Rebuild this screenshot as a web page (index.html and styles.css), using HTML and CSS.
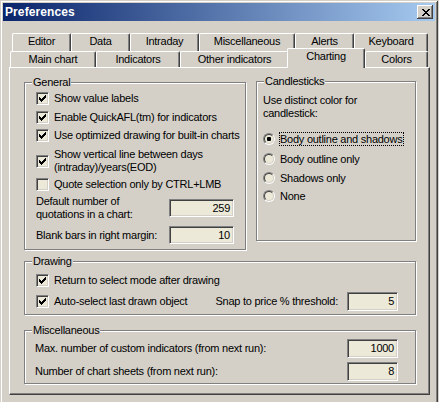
FILE: index.html
```html
<!DOCTYPE html>
<html>
<head>
<meta charset="utf-8">
<title>Preferences</title>
<link rel="stylesheet" href="styles.css">
</head>
<body>
<div class="window">
  <div class="titlebar">
    <span class="title">Preferences</span>
    <span class="close"><svg width="8" height="7" viewBox="0 0 8 7" shape-rendering="crispEdges"><path d="M0 0h2v1h-2zM6 0h2v1h-2zM1 1h2v1h-2zM5 1h2v1h-2zM2 2h4v1h-4zM3 3h2v1h-2zM2 4h4v1h-4zM1 5h2v1h-2zM5 5h2v1h-2zM0 6h2v1h-2zM6 6h2v1h-2z" fill="#000"/></svg></span>
  </div>
  <div class="sheet">
    <div class="tabrow back">
      <div class="tab t-editor">Editor</div>
      <div class="tab t-data">Data</div>
      <div class="tab t-intraday">Intraday</div>
      <div class="tab t-misc">Miscellaneous</div>
      <div class="tab t-alerts">Alerts</div>
      <div class="tab t-keyboard">Keyboard</div>
    </div>
    <div class="tabrow front">
      <div class="tab t-main">Main chart</div>
      <div class="tab t-ind">Indicators</div>
      <div class="tab t-other">Other indicators</div>
      <div class="tab t-charting selected">Charting</div>
      <div class="tab t-colors">Colors</div>
    </div>
    <div class="panel">
      <div class="groups-top">
        <div class="group general">
          <span class="legend">General</span>
          <div class="cb-row r1"><span class="cb"><svg width="7" height="7" viewBox="0 0 7 7" shape-rendering="crispEdges"><path d="M0 2h1v3h-1zM1 3h1v3h-1zM2 4h1v3h-1zM3 3h1v3h-1zM4 2h1v3h-1zM5 1h1v3h-1zM6 0h1v3h-1z" fill="#000"/></svg></span><span class="lbl">Show value labels</span></div>
          <div class="cb-row r2"><span class="cb"><svg width="7" height="7" viewBox="0 0 7 7" shape-rendering="crispEdges"><path d="M0 2h1v3h-1zM1 3h1v3h-1zM2 4h1v3h-1zM3 3h1v3h-1zM4 2h1v3h-1zM5 1h1v3h-1zM6 0h1v3h-1z" fill="#000"/></svg></span><span class="lbl">Enable QuickAFL(tm) for indicators</span></div>
          <div class="cb-row r3"><span class="cb"><svg width="7" height="7" viewBox="0 0 7 7" shape-rendering="crispEdges"><path d="M0 2h1v3h-1zM1 3h1v3h-1zM2 4h1v3h-1zM3 3h1v3h-1zM4 2h1v3h-1zM5 1h1v3h-1zM6 0h1v3h-1z" fill="#000"/></svg></span><span class="lbl">Use optimized drawing for built-in charts</span></div>
          <div class="cb-row r4"><span class="cb"><svg width="7" height="7" viewBox="0 0 7 7" shape-rendering="crispEdges"><path d="M0 2h1v3h-1zM1 3h1v3h-1zM2 4h1v3h-1zM3 3h1v3h-1zM4 2h1v3h-1zM5 1h1v3h-1zM6 0h1v3h-1z" fill="#000"/></svg></span><span class="lbl">Show vertical line between days<br>(intraday)/years(EOD)</span></div>
          <div class="cb-row r5"><span class="cb"></span><span class="lbl">Quote selection only by CTRL+LMB</span></div>
          <div class="field-row f1"><span class="flabel">Default number of<br>quotations in a chart:</span><span class="edit e-wide">259</span></div>
          <div class="field-row f2"><span class="flabel">Blank bars in right margin:</span><span class="edit e-wide">10</span></div>
        </div>
        <div class="group candles">
          <span class="legend">Candlesticks</span>
          <div class="ctext">Use distinct color for<br>candlestick:</div>
          <div class="rb-row q1"><span class="rb"><span class="rb-in on"></span></span><span class="rlabel focus">Body outline and shadows</span></div>
          <div class="rb-row q2"><span class="rb"><span class="rb-in"></span></span><span class="rlabel">Body outline only</span></div>
          <div class="rb-row q3"><span class="rb"><span class="rb-in"></span></span><span class="rlabel">Shadows only</span></div>
          <div class="rb-row q4"><span class="rb"><span class="rb-in"></span></span><span class="rlabel">None</span></div>
        </div>
      </div>
      <div class="group drawing">
        <span class="legend">Drawing</span>
        <div class="cb-row"><span class="cb"><svg width="7" height="7" viewBox="0 0 7 7" shape-rendering="crispEdges"><path d="M0 2h1v3h-1zM1 3h1v3h-1zM2 4h1v3h-1zM3 3h1v3h-1zM4 2h1v3h-1zM5 1h1v3h-1zM6 0h1v3h-1z" fill="#000"/></svg></span><span class="lbl">Return to select mode after drawing</span></div>
        <div class="field-row d2"><span class="cb"><svg width="7" height="7" viewBox="0 0 7 7" shape-rendering="crispEdges"><path d="M0 2h1v3h-1zM1 3h1v3h-1zM2 4h1v3h-1zM3 3h1v3h-1zM4 2h1v3h-1zM5 1h1v3h-1zM6 0h1v3h-1z" fill="#000"/></svg></span><span class="lbl">Auto-select last drawn object</span><span class="snap">Snap to price % threshold:</span><span class="edit e-narrow">5</span></div>
      </div>
      <div class="group misc">
        <span class="legend">Miscellaneous</span>
        <div class="field-row m1"><span class="flabel">Max. number of custom indicators (from next run):</span><span class="edit e-narrow">1000</span></div>
        <div class="field-row m2"><span class="flabel">Number of chart sheets (from next run):</span><span class="edit e-narrow">8</span></div>
      </div>
    </div>
  </div>
</div>
</body>
</html>
```
FILE: styles.css
```css
html, body {
  overflow: hidden;
}

body {
  margin: 0;
  background: #d4d0c8;
  font-family: "Liberation Sans", Arial, sans-serif;
  font-size: 11px;
  letter-spacing: -0.25px;
  color: #000;
}

.window {
  width: 438px;
  height: 402px;
  box-sizing: border-box;
  padding: 3px;
  background: #d4d0c8;
  box-shadow: inset 1px 1px #d4d0c8, inset -1px 0 #404040, inset 2px 2px #fff, inset -2px 0 #808080;
  overflow: hidden;
}

.titlebar {
  height: 18px;
  display: flex;
  align-items: center;
  justify-content: space-between;
  padding: 0 2px;
  background: linear-gradient(to right, #0a246a, #a6caf0);
}

.title {
  color: #fff;
  font-weight: bold;
  font-size: 12px;
  letter-spacing: 0.1px;
}

.close {
  width: 16px;
  height: 14px;
  box-sizing: border-box;
  display: flex;
  align-items: center;
  justify-content: center;
  padding-left: 1px;
  background: #d4d0c8;
  box-shadow: inset -1px -1px #404040, inset 1px 1px #fff, inset -2px -2px #808080;
}

.sheet {
  padding: 12px 0 0 6px;
}

.tabrow {
  display: flex;
}

.tabrow.back {
  margin-left: 3px;
  height: 18px;
}

.tabrow.front {
  margin-left: 1px;
  height: 16px;
}

.tab {
  box-sizing: border-box;
  height: 100%;
  flex: none;
  border-top: 1px solid #fff;
  border-left: 1px solid #fff;
  border-right: 1px solid #404040;
  border-radius: 2px 2px 0 0;
  box-shadow: inset -1px 0 #808080;
  background: #d4d0c8;
  text-align: center;
  line-height: 15px;
  white-space: nowrap;
}

.t-editor { width: 59px; }
.t-data { width: 59px; }
.t-intraday { width: 69px; }
.t-misc { width: 96px; }
.t-alerts { width: 59px; }
.t-keyboard { width: 74px; }

.t-main { width: 86px; }
.t-ind { width: 84px; }
.t-other { width: 109px; }
.t-charting { width: 78px; }
.t-colors { width: 63px; }

.tab.selected {
  height: 20px;
  margin: -3px 0 -1px -2px;
  position: relative;
  z-index: 1;
}

.panel {
  width: 421px;
  height: 328px;
  box-sizing: border-box;
  border: 1px solid;
  border-color: #fff #404040 #404040 #fff;
  box-shadow: inset -1px -1px #808080;
  padding: 14px 0 0 14px;
}

.groups-top {
  display: flex;
  align-items: flex-start;
  gap: 10px;
}

.group {
  position: relative;
  box-sizing: border-box;
  border: 1px solid #808080;
  box-shadow: 1px 1px #fff, inset 1px 1px #fff;
}

.legend {
  position: absolute;
  top: -7px;
  left: 7px;
  padding: 0 1px;
  line-height: 13px;
  background: #d4d0c8;
}

.general {
  width: 222px;
  height: 168px;
  padding: 9px 11px 0 11px;
}

.candles {
  width: 160px;
  height: 160px;
  margin-top: -1px;
  padding: 12px 6px 0 6px;
}

.drawing {
  width: 392px;
  height: 54px;
  margin-top: 11px;
  padding: 12px 17px 0 11px;
}

.misc {
  width: 392px;
  height: 54px;
  margin-top: 15px;
  padding: 8px 17px 0 10px;
}

.cb-row {
  display: flex;
  align-items: center;
  height: 13px;
  line-height: 13px;
}

.r2 { margin-top: 6px; }
.r3 { margin-top: 5px; }
.r4 { margin-top: 6px; height: 26px; }
.r5 { margin-top: 4px; }

.cb {
  flex: none;
  width: 13px;
  height: 13px;
  box-sizing: border-box;
  padding: 2px;
  display: flex;
  border: 1px solid;
  border-color: #808080 #fff #fff #808080;
  box-shadow: inset 1px 1px #404040, inset -1px -1px #d4d0c8;
  background: #ece9d8;
}

.lbl {
  margin-left: 5px;
  white-space: nowrap;
}

.field-row {
  display: flex;
  align-items: center;
  height: 18px;
  line-height: 13px;
}

.f1 { margin-top: 8px; }
.f2 { margin-top: 9px; }
.d2 { margin-top: 5px; height: 19px; }
.m2 { margin-top: 4px; }
.m1, .m2 { height: 19px; }

.flabel {
  white-space: nowrap;
}

.edit {
  flex: none;
  box-sizing: border-box;
  height: 100%;
  margin-left: auto;
  border: 1px solid;
  border-color: #808080 #fff #fff #808080;
  box-shadow: inset 1px 1px #404040, inset -1px -1px #d4d0c8;
  background: #ece9d8;
  text-align: right;
  padding-right: 3px;
  line-height: 16px;
}

.e-wide { width: 65px; }
.e-narrow { width: 51px; }

.snap {
  margin-left: auto;
  margin-right: 9px;
  white-space: nowrap;
}

.snap + .edit {
  margin-left: 0;
}

.ctext {
  line-height: 13px;
}

.rb-row {
  display: flex;
  align-items: center;
  height: 14px;
}

.q1 { margin-top: 12px; }
.q2 { margin-top: 6px; }
.q3 { margin-top: 5px; }
.q4 { margin-top: 4px; }

.rb {
  flex: none;
  width: 12px;
  height: 12px;
  box-sizing: border-box;
  border-radius: 50%;
  border: 1px solid;
  border-color: #808080 #fff #fff #808080;
}

.rb-in {
  display: flex;
  align-items: center;
  justify-content: center;
  width: 10px;
  height: 10px;
  box-sizing: border-box;
  border-radius: 50%;
  border: 1px solid;
  border-color: #404040 #d4d0c8 #d4d0c8 #404040;
  background: #ece9d8;
}

.rb-in.on::after {
  content: "";
  width: 4px;
  height: 4px;
  border-radius: 1px;
  background: #000;
}

.rlabel {
  margin-left: 4px;
  padding-right: 1px;
  border: 1px dotted transparent;
  line-height: 12px;
  white-space: nowrap;
}

.rlabel.focus {
  border-color: #000;
}
```
